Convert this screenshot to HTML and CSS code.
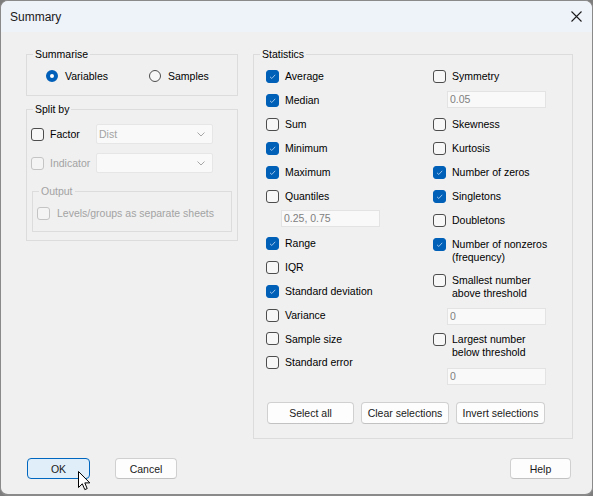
FILE: index.html
```html
<!DOCTYPE html>
<html>
<head>
<meta charset="utf-8">
<link rel="stylesheet" href="styles.css">
</head>
<body>
<div class="window">
  <div class="titlebar">
    <span class="title">Summary</span>
    <svg class="close" width="11" height="11" viewBox="0 0 11 11"><path d="M0.5 0.5L10.5 10.5M10.5 0.5L0.5 10.5" stroke="#1b1b1b" stroke-width="1.1" fill="none"/></svg>
  </div>
  <div class="content">
    <div class="leftcol">
      <fieldset class="group summarise">
        <legend>Summarise</legend>
        <div class="body radios">
          <label class="opt"><span class="radio on"></span>Variables</label>
          <label class="opt"><span class="radio"></span>Samples</label>
        </div>
      </fieldset>
      <fieldset class="group splitby">
        <legend>Split by</legend>
        <div class="body">
          <div class="combo-row">
            <label class="opt"><span class="cb"></span>Factor</label>
            <div class="combo"><span>Dist</span><svg width="8" height="5" viewBox="0 0 8 5"><path d="M0.5 0.5L4 4L7.5 0.5" stroke="#a6a6a6" fill="none"/></svg></div>
          </div>
          <div class="combo-row second">
            <label class="opt disabled"><span class="cb dis"></span>Indicator</label>
            <div class="combo"><span></span><svg width="8" height="5" viewBox="0 0 8 5"><path d="M0.5 0.5L4 4L7.5 0.5" stroke="#a6a6a6" fill="none"/></svg></div>
          </div>
          <fieldset class="group output disabled">
            <legend>Output</legend>
            <div class="body">
              <label class="opt"><span class="cb dis"></span>Levels/groups as separate sheets</label>
            </div>
          </fieldset>
        </div>
      </fieldset>
    </div>
    <fieldset class="group stats">
      <legend>Statistics</legend>
      <div class="body">
        <div class="cols">
          <div class="col col1">
            <label class="row"><span class="cb on"><svg width="11" height="11" viewBox="0 0 11 11"><path d="M3 5.8L4.8 7.5L8.2 3.8" stroke="#9cc3ea" stroke-width="1" fill="none"/></svg></span>Average</label>
            <label class="row"><span class="cb on"><svg width="11" height="11" viewBox="0 0 11 11"><path d="M3 5.8L4.8 7.5L8.2 3.8" stroke="#9cc3ea" stroke-width="1" fill="none"/></svg></span>Median</label>
            <label class="row"><span class="cb"></span>Sum</label>
            <label class="row"><span class="cb on"><svg width="11" height="11" viewBox="0 0 11 11"><path d="M3 5.8L4.8 7.5L8.2 3.8" stroke="#9cc3ea" stroke-width="1" fill="none"/></svg></span>Minimum</label>
            <label class="row"><span class="cb on"><svg width="11" height="11" viewBox="0 0 11 11"><path d="M3 5.8L4.8 7.5L8.2 3.8" stroke="#9cc3ea" stroke-width="1" fill="none"/></svg></span>Maximum</label>
            <label class="row"><span class="cb"></span>Quantiles</label>
            <div class="textbox tb-quant">0.25, 0.75</div>
            <label class="row after-tb"><span class="cb on"><svg width="11" height="11" viewBox="0 0 11 11"><path d="M3 5.8L4.8 7.5L8.2 3.8" stroke="#9cc3ea" stroke-width="1" fill="none"/></svg></span>Range</label>
            <label class="row"><span class="cb"></span>IQR</label>
            <label class="row"><span class="cb on"><svg width="11" height="11" viewBox="0 0 11 11"><path d="M3 5.8L4.8 7.5L8.2 3.8" stroke="#9cc3ea" stroke-width="1" fill="none"/></svg></span>Standard deviation</label>
            <label class="row"><span class="cb"></span>Variance</label>
            <label class="row short"><span class="cb"></span>Sample size</label>
            <label class="row"><span class="cb"></span>Standard error</label>
          </div>
          <div class="col col2">
            <label class="row"><span class="cb"></span>Symmetry</label>
            <div class="textbox tb-sym">0.05</div>
            <label class="row after-tb"><span class="cb"></span>Skewness</label>
            <label class="row"><span class="cb"></span>Kurtosis</label>
            <label class="row"><span class="cb on"><svg width="11" height="11" viewBox="0 0 11 11"><path d="M3 5.8L4.8 7.5L8.2 3.8" stroke="#9cc3ea" stroke-width="1" fill="none"/></svg></span>Number of zeros</label>
            <label class="row"><span class="cb on"><svg width="11" height="11" viewBox="0 0 11 11"><path d="M3 5.8L4.8 7.5L8.2 3.8" stroke="#9cc3ea" stroke-width="1" fill="none"/></svg></span>Singletons</label>
            <label class="row"><span class="cb"></span>Doubletons</label>
            <label class="multi m-nonzero"><span class="cb on"><svg width="11" height="11" viewBox="0 0 11 11"><path d="M3 5.8L4.8 7.5L8.2 3.8" stroke="#9cc3ea" stroke-width="1" fill="none"/></svg></span><span class="txt">Number of nonzeros<br>(frequency)</span></label>
            <label class="multi m-small"><span class="cb"></span><span class="txt">Smallest number<br>above threshold</span></label>
            <div class="textbox tb-thr">0</div>
            <label class="multi m-large"><span class="cb"></span><span class="txt">Largest number<br>below threshold</span></label>
            <div class="textbox tb-thr tb-last">0</div>
          </div>
        </div>
        <div class="btnrow">
          <button class="btn w87">Select all</button>
          <button class="btn w88">Clear selections</button>
          <button class="btn w89">Invert selections</button>
        </div>
      </div>
    </fieldset>
  </div>
  <div class="footer">
    <button class="btn fbtn ok">OK</button>
    <button class="btn fbtn cancel">Cancel</button>
    <button class="btn fbtn help">Help</button>
  </div>
  <svg class="cursor" width="13" height="20" viewBox="0 0 13 20"><path d="M0.5 0.5L0.5 16.5L4.3 12.8L6.8 18.6L9.2 17.6L6.8 11.9L11.8 11.9Z" fill="#ffffff" stroke="#000000" stroke-width="1" stroke-linejoin="miter"/></svg>
</div>
</body>
</html>
```
FILE: styles.css
```css
html, body {
  margin: 0;
  padding: 0;
  background: #7d7d7d;
}
body {
  font-family: "Liberation Sans", Arial, sans-serif;
  font-size: 10.5px;
  color: #000;
}
.window {
  position: relative;
  width: 593px;
  height: 496px;
  box-sizing: border-box;
  border: 1px solid #8a8a8a;
  border-bottom-width: 2px;
  border-radius: 8px;
  background: #f0f0f0;
  overflow: hidden;
}
.titlebar {
  height: 31px;
  background: #eef2f9;
  display: flex;
  align-items: flex-start;
  justify-content: space-between;
}
.title {
  font-size: 12px;
  line-height: 14px;
  margin-top: 9px;
  margin-left: 9px;
  color: #1a1a1a;
}
.close {
  margin-top: 10px;
  margin-right: 10px;
}
.content {
  display: flex;
  align-items: flex-start;
  gap: 15px;
  padding: 16px 19px 0 25px;
}
.leftcol {
  width: 212px;
  display: flex;
  flex-direction: column;
}
fieldset.group {
  margin: 0;
  padding: 0;
  border: 1px solid #dcdcdc;
  min-width: 0;
  box-sizing: border-box;
}
fieldset.group > legend {
  padding: 0 2px;
  margin-left: 6px;
  line-height: 13px;
  height: 13px;
  font-size: 10.5px;
}
.summarise { width: 212px; }
.summarise .body {
  padding: 7px 0 11px 19px;
}
.radios {
  display: grid;
  grid-template-columns: 103px auto;
}
.opt {
  display: flex;
  align-items: center;
  height: 16px;
  gap: 7px;
  white-space: nowrap;
}
.radio {
  width: 12px;
  height: 12px;
  box-sizing: border-box;
  border-radius: 50%;
  border: 1px solid #4d4d4d;
  background: #f7f7f7;
  flex: none;
}
.radio.on {
  border: 4px solid #005fb8;
  background: #ffffff;
}
.splitby {
  width: 212px;
  margin-top: 7px !important;
}
.splitby > .body {
  padding: 8px 5px 8px 4px;
}
.combo-row {
  display: grid;
  grid-template-columns: 65px 117px;
  align-items: center;
  height: 20px;
}
.combo-row .opt { gap: 6px; }
.combo-row.second { margin-top: 9px; }
.cb {
  width: 13px;
  height: 13px;
  box-sizing: border-box;
  border: 1px solid #4d4d4d;
  border-radius: 3px;
  background: #f7f7f7;
  flex: none;
  display: flex;
  align-items: center;
  justify-content: center;
}
.cb.on {
  background: #0060b8;
  border-color: #0060b8;
}
.cb.dis {
  border-color: #c4c4c4;
  background: #f4f4f4;
}
.disabled, .disabled .opt, .opt.disabled {
  color: #a3a3a3;
}
.combo {
  height: 20px;
  box-sizing: border-box;
  border: 1px solid #e6e6e6;
  background: #f9f9f9;
  border-radius: 2px;
  display: flex;
  align-items: center;
  justify-content: space-between;
  padding: 0 7px 0 2px;
  color: #a3a3a3;
}
.output {
  width: 200px;
  margin: 12px 0 0 1px !important;
}
.output > legend { color: #a3a3a3; }
.output > .body {
  padding: 7px 0 10px 4px;
}
.output .opt { gap: 7px; }
.stats {
  width: 320px;
}
.stats > .body {
  padding: 3px 0 14px 12px;
}
.cols {
  display: grid;
  grid-template-columns: 167px auto;
  align-items: start;
}
.col {
  display: flex;
  flex-direction: column;
}
.row {
  display: flex;
  align-items: center;
  gap: 6px;
  height: 24px;
  white-space: nowrap;
}
.row.short { height: 23px; }
.row.after-tb { margin-top: 4px; }
.textbox {
  height: 17px;
  box-sizing: border-box;
  border: 1px solid #e3e3e3;
  background: #f9f9f9;
  color: #808080;
  line-height: 15px;
  padding-left: 2px;
}
.tb-quant {
  width: 99px;
  margin: 2px 0 0 15px;
}
.tb-sym {
  width: 99px;
  margin: 3px 0 0 14px;
}
.tb-thr {
  width: 99px;
  margin: 8px 0 0 14px;
}
.tb-last { margin-top: 9px; }
.multi {
  display: flex;
  align-items: flex-start;
  gap: 6px;
  line-height: 13px;
}
.m-nonzero { margin-top: 6px; }
.m-small { margin-top: 10px; }
.m-large { margin-top: 8px; }
.btnrow {
  display: flex;
  gap: 7px;
  margin: 17px 0 0 1px;
}
.btn {
  font-family: "Liberation Sans", Arial, sans-serif;
  font-size: 10.5px;
  color: #1a1a1a;
  height: 22px;
  box-sizing: border-box;
  border: 1px solid #d0d0d0;
  border-bottom-color: #c2c2c2;
  border-radius: 4px;
  background: #fdfdfd;
  padding: 0;
  margin: 0;
}
.w87 { width: 87px; }
.w88 { width: 88px; }
.w89 { width: 89px; }
.footer {
  display: flex;
  padding: 19px 21px 0 26px;
}
.fbtn {
  height: 21px;
}
.ok {
  width: 63px;
  border: 1px solid #0067c0;
  background: #e0eef9;
}
.cancel {
  width: 62px;
  margin-left: 25px;
}
.help {
  width: 61px;
  margin-left: auto;
}
.cursor {
  position: absolute;
  left: 77px;
  top: 470px;
}
```
